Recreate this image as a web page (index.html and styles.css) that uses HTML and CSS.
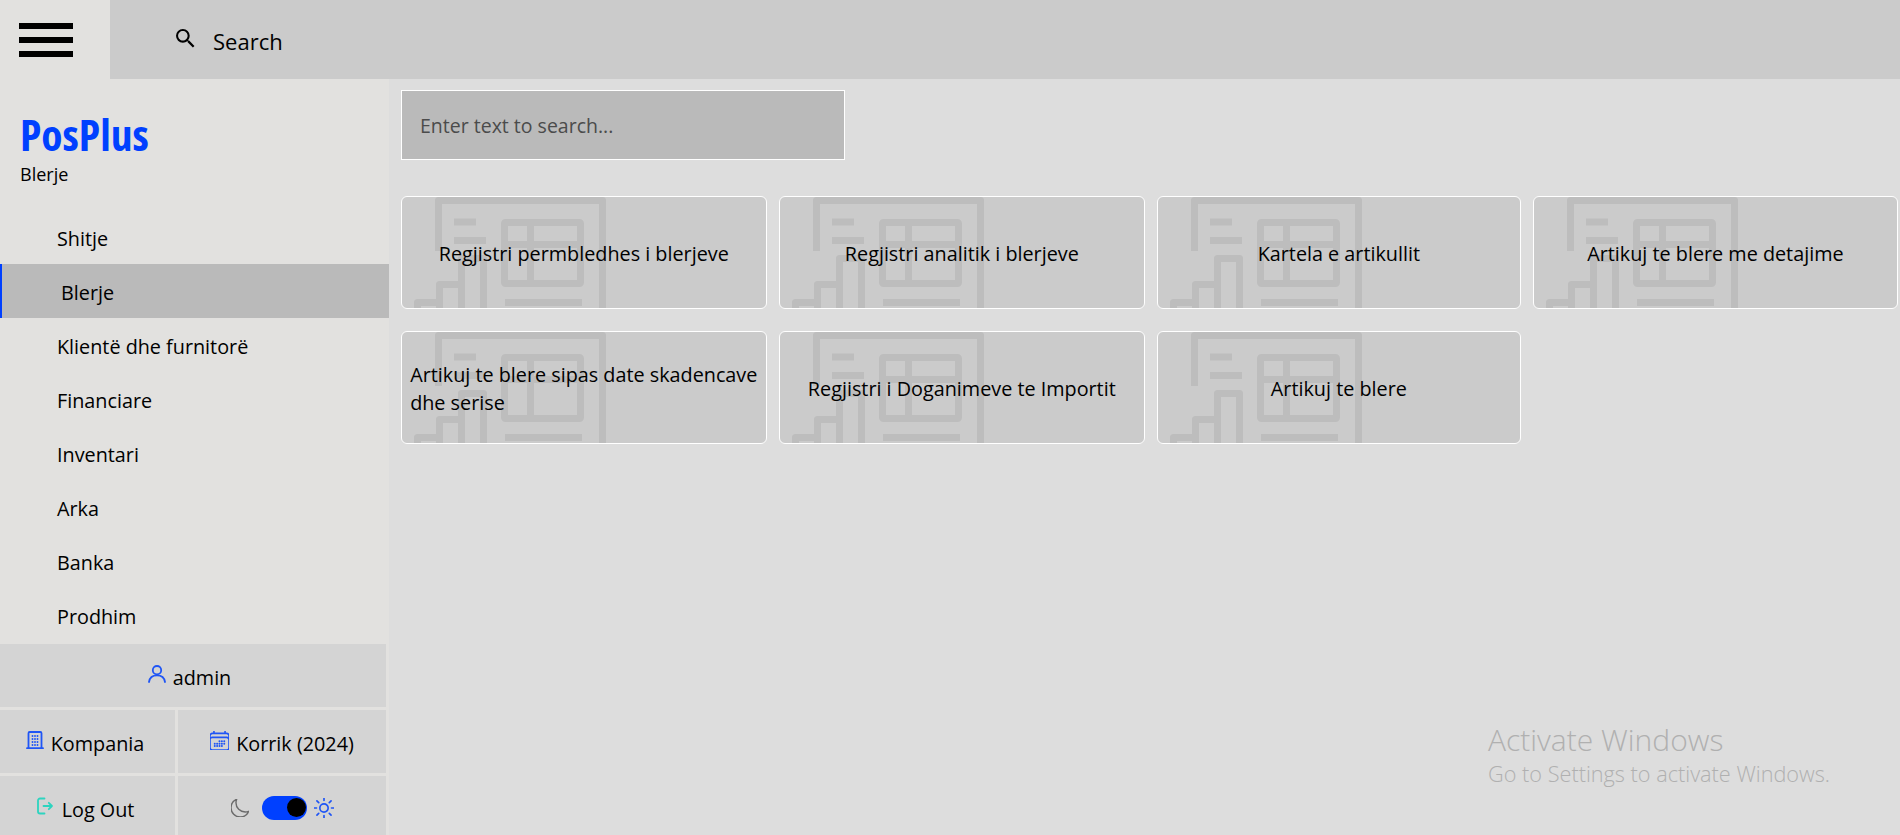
FILE: index.html
```html
<!DOCTYPE html>
<html lang="sq">
<head>
    <meta charset="UTF-8">
    <meta name="viewport" content="width=device-width, initial-scale=1.0">
    <title>PosPlus - Blerje</title>
    <link rel="stylesheet" href="styles.css">
</head>
<body>
    <header class="topbar">
        <div class="burger">
            <span></span>
            <span></span>
            <span></span>
        </div>
        <div class="topsearch">
            <svg class="icon-search" viewBox="3 3 18 18"><path d="M15.5 14h-.79l-.28-.27A6.471 6.471 0 0 0 16 9.5 6.5 6.5 0 1 0 9.5 16c1.61 0 3.09-.59 4.23-1.57l.27.28v.79l5 4.99L20.49 19l-4.99-5zm-6 0C7.01 14 5 11.99 5 9.5S7.01 5 9.5 5 14 7.01 14 9.5 11.99 14 9.5 14z"/></svg>
            <span>Search</span>
        </div>
    </header>

    <div class="page">
        <aside class="sidebar">
            <div class="brand">
                <h1>PosPlus</h1>
                <p>Blerje</p>
            </div>
            <nav class="menu">
                <a>Shitje</a>
                <a class="valgt">Blerje</a>
                <a>Klientë dhe furnitorë</a>
                <a>Financiare</a>
                <a>Inventari</a>
                <a>Arka</a>
                <a>Banka</a>
                <a>Prodhim</a>
            </nav>
            <div class="bottom">
                <div class="cell wide">
                    <svg class="icon blue" viewBox="0 0 18 18"><circle cx="9" cy="5.2" r="4.2"/><path d="M1 17c.6-4 3.6-6.6 8-6.6s7.400 2.600 8 6.600"/></svg>
                    <span>admin</span>
                </div>
                <div class="cell left">
                    <svg class="icon blue" viewBox="0 0 18 18"><path d="M1 17.200h16M2.500 17V2.200C2.500 1.400 3 1 3.700 1h10.600c.7 0 1.200.4 1.200 1.200V17"/><path class="dots" d="M6.500 5h.01M9 5h.01M11.500 5h.01M6.500 8h.01M9 8h.01M11.500 8h.01M6.500 11h.01M9 11h.01M11.500 11h.01M6.500 14h.01M9 14h.01M11.500 14h.01"/></svg>
                    <span>Kompania</span>
                </div>
                <div class="cell">
                    <svg class="icon blue cal" viewBox="3 3 18 18"><path d="M6.750 3v2.250M17.250 3v2.250M3 18.750V7.500a2.250 2.250 0 0 1 2.250-2.250h13.500A2.250 2.250 0 0 1 21 7.500v11.250m-18 0A2.250 2.250 0 0 0 5.250 21h13.500A2.250 2.250 0 0 0 21 18.750m-18 0v-7.500A2.250 2.250 0 0 1 5.250 9h13.500A2.250 2.250 0 0 1 21 11.250v7.500"/><path class="dots" d="M12 12.750h.01M12 15h.01M12 17.250h.01M9.750 15h.01M9.750 17.250h.01M7.500 15h.01M7.500 17.250h.01M14.250 12.750h.01M14.250 15h.01M14.250 17.250h.01M16.500 12.750h.01M16.500 15h.01"/></svg>
                    <span>Korrik (2024)</span>
                </div>
                <div class="cell left logout">
                    <svg class="icon teal" viewBox="0 0 16 18"><path d="M7.500 1.500H3a2 2 0 0 0-2 2v11a2 2 0 0 0 2 2h4.500"/><path d="M6.500 9h8.500M11.800 5.800 15 9l-3.200 3.200"/></svg>
                    <span>Log Out</span>
                </div>
                <div class="cell mode">
                    <svg class="icon moon" viewBox="3 2 19 19"><path d="M21.752 15.002A9.720 9.720 0 0 1 18 15.750c-5.385 0-9.750-4.365-9.750-9.750 0-1.330.266-2.597.748-3.752A9.753 9.753 0 0 0 3 11.250C3 16.635 7.365 21 12.750 21a9.753 9.753 0 0 0 9.002-5.998Z"/></svg>
                    <div class="toggle"><span></span></div>
                    <svg class="icon blue sun" viewBox="3 3 18 18"><path d="M12 3v2.250m6.364.386-1.591 1.591M21 12h-2.250m-.386 6.364-1.591-1.591M12 18.750V21m-4.773-4.227-1.591 1.591M5.250 12H3m4.227-4.773L5.636 5.636M15.750 12a3.750 3.750 0 1 1-7.500 0 3.750 3.750 0 0 1 7.500 0Z"/></svg>
                </div>
            </div>
        </aside>

        <main class="content">
            <div class="searchbox">Enter text to search...</div>

            <section class="cards">
                <article class="card">
                    <svg class="mark" viewBox="0 0 365 113"><use href="#mark"/></svg>
                    <h2>Regjistri permbledhes i blerjeve</h2>
                </article>
                <article class="card">
                    <svg class="mark" viewBox="0 0 365 113"><use href="#mark"/></svg>
                    <h2>Regjistri analitik i blerjeve</h2>
                </article>
                <article class="card">
                    <svg class="mark" viewBox="0 0 365 113"><use href="#mark"/></svg>
                    <h2>Kartela e artikullit</h2>
                </article>
                <article class="card">
                    <svg class="mark" viewBox="0 0 365 113"><use href="#mark"/></svg>
                    <h2>Artikuj te blere me detajime</h2>
                </article>
                <article class="card">
                    <svg class="mark" viewBox="0 0 365 113"><use href="#mark"/></svg>
                    <h2>Artikuj te blere sipas date skadencave<br>dhe serise</h2>
                </article>
                <article class="card">
                    <svg class="mark" viewBox="0 0 365 113"><use href="#mark"/></svg>
                    <h2>Regjistri i Doganimeve te Importit</h2>
                </article>
                <article class="card">
                    <svg class="mark" viewBox="0 0 365 113"><use href="#mark"/></svg>
                    <h2>Artikuj te blere</h2>
                </article>
            </section>
        </main>
    </div>

    <div class="activate">
        <p class="big">Activate Windows</p>
        <p>Go to Settings to activate Windows.</p>
    </div>

    <svg class="defs" width="0" height="0">
        <g id="mark" fill="none" stroke="#bdbdbd" stroke-width="7" stroke-linejoin="round">
            <path d="M37.500 55V4.500H201.500V120"/>
            <path d="M53 26H75M53 44.500H85"/>
            <rect x="103.500" y="26.500" width="76" height="61" rx="1"/>
            <path d="M103.500 48.500H179.500M129.500 26.500V87.500"/>
            <path d="M60.500 120V62.500H82.500V120"/>
            <path d="M38.500 120V88.500H60"/>
            <path d="M16.500 120V106.500H38"/>
            <path d="M104 106.500H181"/>
        </g>
    </svg>
</body>
</html>
```

FILE: styles.css
```css
* {
    box-sizing: border-box;
}

html, body {
    height: 100%;
    overflow: hidden;
}

body {
    margin: 0;
    font-family: "Open Sans", "Noto Sans", sans-serif;
    font-size: 19.800px;
    color: #000;
    background-color: #dddddd;
}

/* top bar */

.topbar {
    display: flex;
    height: 79px;
    background-color: #cbcbcb;
}

.burger {
    display: flex;
    flex-direction: column;
    justify-content: center;
    gap: 8px;
    width: 110px;
    padding-left: 19px;
    background-color: #e2e1df;
}

.burger span {
    width: 54px;
    height: 6px;
    background-color: #000;
}

.topsearch {
    display: flex;
    align-items: center;
    gap: 18px;
    padding-left: 66px;
}

.icon-search {
    width: 19px;
    height: 19px;
    margin-top: -2px;
}

.topsearch span {
    padding-top: 3px;
    font-size: 22px;
}

/* sidebar */

.page {
    display: flex;
    height: 756px;
}

.sidebar {
    width: 389px;
    flex-shrink: 0;
    background-color: #e2e1df;
}

.brand {
    height: 131px;
    padding: 31px 0 0 20px;
}

.brand h1 {
    margin: 0;
    font-size: 43.500px;
    line-height: 50px;
    font-weight: 700;
    font-stretch: 75%;
    color: #0040ff;
}

.brand p {
    margin: 3px 0 0;
    font-size: 18px;
    line-height: 23px;
}

.menu a {
    display: block;
    height: 54px;
    padding-left: 57px;
    line-height: 57px;
}

.menu a.valgt {
    padding-left: 59px;
    border-left: 2px solid #0040ff;
    background-color: #bababa;
}

.bottom {
    display: grid;
    grid-template-columns: 175px 208px;
    grid-auto-rows: 63px;
    gap: 3px;
    margin-top: 2px;
}

.cell {
    display: flex;
    align-items: center;
    justify-content: center;
    gap: 7px;
    background-color: #d4d4d4;
}

.cell span {
    padding-top: 3px;
}

.cell.wide {
    grid-column: 1 / 3;
    padding-right: 7px;
}

.cell.left {
    padding-right: 5px;
}

.cell.logout {
    gap: 8px;
}

.icon {
    width: 18px;
    height: 18px;
    margin-top: -3px;
    fill: none;
    stroke-width: 1.800;
    stroke-linecap: round;
    stroke-linejoin: round;
}

.icon.cal {
    width: 19px;
    height: 19px;
    stroke-width: 1.500;
}

.blue {
    stroke: #1f55f5;
}

.teal {
    stroke: #2dd4bf;
}

.dots {
    stroke-width: 1.900;
}

.moon {
    stroke: #6b6b6b;
    stroke-width: 1.500;
    margin-top: 0;
}

.sun {
    width: 20px;
    height: 20px;
    margin-top: 0;
    stroke-width: 1.500;
}

.mode {
    gap: 13px;
}

.mode .sun {
    margin-left: -6px;
}

.toggle {
    display: flex;
    align-items: center;
    justify-content: flex-end;
    width: 45px;
    height: 24px;
    padding-right: 1px;
    border-radius: 12px;
    background-color: #0040ff;
}

.toggle span {
    width: 19px;
    height: 19px;
    padding: 0;
    border-radius: 50%;
    background-color: #000;
}

/* main */

.content {
    flex: 1;
    padding: 11px 2px 0 12px;
}

.searchbox {
    display: flex;
    align-items: center;
    width: 444px;
    height: 70px;
    padding-left: 18px;
    border: 1px solid #fff;
    font-size: 19.500px;
    color: #4b4b4b;
    background-color: #bababa;
}

.cards {
    display: grid;
    grid-template-columns: 365.500px 366px 363.500px 365px;
    column-gap: 12.300px;
    row-gap: 22px;
    margin-top: 36px;
}

.card {
    position: relative;
    display: flex;
    align-items: center;
    justify-content: center;
    height: 113px;
    padding: 2px 4px 0;
    overflow: hidden;
    border: 1px solid #fff;
    border-radius: 6px;
    background-color: #cbcbcb;
}

.card h2 {
    position: relative;
    margin: 0;
    font-size: 19.800px;
    font-weight: 400;
    line-height: 27.500px;
}

.mark {
    position: absolute;
    left: -1px;
    top: -1px;
    width: 365px;
    height: 113px;
}

.defs {
    position: absolute;
}

/* watermark */

.activate {
    position: absolute;
    left: 1488px;
    top: 721px;
    color: #b0b0b0;
    font-weight: 300;
    font-size: 21.700px;
}

.activate p {
    margin: 0;
    line-height: 30px;
}

.activate .big {
    font-size: 30px;
    line-height: 38px;
}
```
